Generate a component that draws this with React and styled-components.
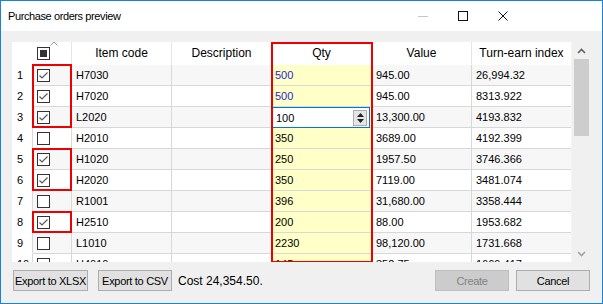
import React from 'react';
import styled, { createGlobalStyle } from 'styled-components';

const ROW_H = 21;
const HEAD_H = 23;

const rows = [
    { n: 1, code: 'H7030', qty: '500', value: '945.00', index: '26,994.32', checked: true, changed: true },
    { n: 2, code: 'H7020', qty: '500', value: '945.00', index: '8313.922', checked: true, changed: true },
    { n: 3, code: 'L2020', qty: '100', value: '13,300.00', index: '4193.832', checked: true, editing: true },
    { n: 4, code: 'H2010', qty: '350', value: '3689.00', index: '4192.399' },
    { n: 5, code: 'H1020', qty: '250', value: '1957.50', index: '3746.366', checked: true },
    { n: 6, code: 'H2020', qty: '350', value: '7119.00', index: '3481.074', checked: true },
    { n: 7, code: 'R1001', qty: '396', value: '31,680.00', index: '3358.444' },
    { n: 8, code: 'H2510', qty: '200', value: '88.00', index: '1953.682', checked: true },
    { n: 9, code: 'L1010', qty: '2230', value: '98,120.00', index: '1731.668' },
    { n: 10, code: 'H4010', qty: '145', value: '352.75', index: '1669.417' },
];

// rows whose checkboxes are boxed in red: [first row, count]
const marks = [[0, 3], [4, 2], [7, 1]];

const GlobalStyle = createGlobalStyle`
    html, body {
        margin: 0;
        padding: 0;
        background: #ffffff;
    }
    body {
        font-family: "Liberation Sans", Arial, sans-serif;
    }
`;

function CheckBox({ checked, partial }) {
    return (
        <Box>
            {checked && (
                <svg width="11" height="11" viewBox="0 0 11 11">
                    <path d="M1.5 5.5 L4 8 L9.5 2.5" fill="none" stroke="#5a5a5a" strokeWidth="1.2" />
                </svg>
            )}
            {partial && <Fill />}
        </Box>
    );
}

function App() {
    return (
        <>
            <GlobalStyle />
            <Window>
                <TitleBar>
                    <Title>Purchase orders preview</Title>
                    <Controls>
                        <Ctrl>
                            <svg width="10" height="10" viewBox="0 0 10 10">
                                <path d="M0 5.5 H10" stroke="#c4c4c4" strokeWidth="1" />
                            </svg>
                        </Ctrl>
                        <Ctrl>
                            <svg width="10" height="10" viewBox="0 0 10 10">
                                <rect x="0.5" y="0.5" width="9" height="9" fill="none" stroke="#111" strokeWidth="1" />
                            </svg>
                        </Ctrl>
                        <Ctrl>
                            <svg width="10" height="10" viewBox="0 0 10 10">
                                <path d="M0.5 0.5 L9.5 9.5 M9.5 0.5 L0.5 9.5" stroke="#111" strokeWidth="1" />
                            </svg>
                        </Ctrl>
                    </Controls>
                </TitleBar>

                <Body>
                    <GridArea>
                        <Table>
                            <HeadRow>
                                <HeadCell $left />
                                <HeadCell>
                                    <Caret>
                                        <svg width="8" height="5" viewBox="0 0 8 5">
                                            <path d="M0.5 4.5 L4 1 L7.5 4.5" fill="none" stroke="#9a9a9a" strokeWidth="1" />
                                        </svg>
                                    </Caret>
                                    <CheckBox partial />
                                </HeadCell>
                                <HeadCell $center>Item code</HeadCell>
                                <HeadCell $center>Description</HeadCell>
                                <HeadCell $center>Qty</HeadCell>
                                <HeadCell $center>Value</HeadCell>
                                <HeadCell $center>Turn-earn index</HeadCell>
                            </HeadRow>

                            {rows.map((r, i) => (
                                <Row key={r.n}>
                                    <NumCell>{r.n}</NumCell>
                                    <Cell $odd={i % 2 === 0}>
                                        <CheckBox checked={r.checked} />
                                    </Cell>
                                    <Cell $odd={i % 2 === 0}>{r.code}</Cell>
                                    <Cell $odd={i % 2 === 0}></Cell>
                                    <QtyCell $changed={r.changed}>
                                        {r.editing ? (
                                            <Editor>
                                                <span>{r.qty}</span>
                                                <Spin>
                                                    <svg width="7" height="4" viewBox="0 0 7 4">
                                                        <path d="M0 4 L3.5 0 L7 4 Z" fill="#222" />
                                                    </svg>
                                                    <svg width="7" height="4" viewBox="0 0 7 4">
                                                        <path d="M0 0 L3.5 4 L7 0 Z" fill="#222" />
                                                    </svg>
                                                </Spin>
                                            </Editor>
                                        ) : r.qty}
                                    </QtyCell>
                                    <Cell $odd={i % 2 === 0}>{r.value}</Cell>
                                    <Cell $odd={i % 2 === 0}>{r.index}</Cell>
                                </Row>
                            ))}

                            {marks.map(([start, count]) => (
                                <CheckMark
                                    key={start}
                                    style={{ top: HEAD_H + start * ROW_H - 1, height: count * ROW_H + 1 }}
                                />
                            ))}
                            <QtyMark />
                        </Table>

                        <ScrollBar>
                            <Arrow>
                                <svg width="9" height="6" viewBox="0 0 9 6">
                                    <path d="M1 5 L4.5 1.5 L8 5" fill="none" stroke="#606060" strokeWidth="1.6" />
                                </svg>
                            </Arrow>
                            <Track>
                                <Thumb />
                            </Track>
                            <Arrow>
                                <svg width="9" height="6" viewBox="0 0 9 6">
                                    <path d="M1 1 L4.5 4.5 L8 1" fill="none" stroke="#a0a0a0" strokeWidth="1.6" />
                                </svg>
                            </Arrow>
                        </ScrollBar>
                    </GridArea>

                    <Footer>
                        <Button $w={75}>Export to XLSX</Button>
                        <Button $gap={10}>Export to CSV</Button>
                        <Cost>Cost 24,354.50.</Cost>
                        <Spacer />
                        <Button disabled>Create</Button>
                        <Button $gap={7}>Cancel</Button>
                    </Footer>
                </Body>
            </Window>
        </>
    );
}

const Window = styled.div`
    width: 603px;
    height: 304px;
    box-sizing: border-box;
    border: 1px solid #1883d7;
    display: flex;
    flex-direction: column;
    overflow: hidden;
`;

const TitleBar = styled.div`
    height: 30px;
    background: #ffffff;
    display: flex;
    align-items: center;
    justify-content: space-between;
`;

const Title = styled.div`
    padding-left: 7px;
    font-size: 11px;
    letter-spacing: -0.4px;
    color: #000;
`;

const Controls = styled.div`
    display: flex;
    height: 100%;
    margin-right: 79px;
`;

const Ctrl = styled.div`
    width: 40px;
    height: 100%;
    display: flex;
    align-items: center;
    justify-content: center;
`;

const Body = styled.div`
    flex: 1;
    background: #f0f0f0;
    padding: 11px 12px 0 11px;
    display: flex;
    flex-direction: column;
`;

const GridArea = styled.div`
    height: 220px;
    display: flex;
    background: #ffffff;
`;

const Table = styled.div`
    position: relative;
    width: 560px;
    height: 220px;
    overflow: hidden;
    background: #ffffff;
`;

const HeadRow = styled.div`
    display: grid;
    grid-template-columns: 21px 39px repeat(5, 100px);
    height: ${HEAD_H}px;
`;

const HeadCell = styled.div`
    position: relative;
    box-sizing: border-box;
    border-right: 1px solid ${p => (p.$left ? '#ffffff' : '#e5e5e5')};
    border-bottom: 1px solid #ffffff;
    display: flex;
    align-items: center;
    justify-content: ${p => (p.$center ? 'center' : 'flex-start')};
    padding-left: ${p => (p.$center ? '0' : '4px')};
    font-size: 12px;
    color: #000;
`;

const Caret = styled.div`
    position: absolute;
    top: -1px;
    left: 17px;
    line-height: 0;
`;

const Row = styled.div`
    display: grid;
    grid-template-columns: 21px 39px repeat(5, 100px);
    height: ${ROW_H}px;
`;

const Cell = styled.div`
    box-sizing: border-box;
    border-right: 1px solid #d8d8d8;
    border-bottom: 1px solid #d8d8d8;
    background: ${p => (p.$odd ? '#f7f7f7' : '#ffffff')};
    display: flex;
    align-items: center;
    padding-left: 4px;
    font-size: 11px;
    color: #000;
    white-space: nowrap;
`;

const NumCell = styled(Cell)`
    background: #ffffff;
    border-bottom-color: #ffffff;
    border-right-color: #d8d8d8;
    padding-left: 5px;
`;

const QtyCell = styled(Cell)`
    background: #ffffc8;
    color: ${p => (p.$changed ? '#2727d6' : '#000')};
    padding-left: 3px;
`;

const Editor = styled.div`
    box-sizing: border-box;
    width: calc(100% + 2px);
    height: 21px;
    margin: 0 0 -1px -3px;
    padding: 0 2px 0 3px;
    background: #ffffff;
    border: 1px solid #0078d7;
    display: flex;
    align-items: center;
    justify-content: space-between;
    color: #000;
`;

const Spin = styled.div`
    box-sizing: border-box;
    width: 14px;
    height: 16px;
    background: #e5e5e5;
    border: 1px solid #adadad;
    display: flex;
    flex-direction: column;
    align-items: center;
    justify-content: space-evenly;
`;

const Box = styled.div`
    position: relative;
    box-sizing: border-box;
    width: 13px;
    height: 13px;
    border: 1px solid #333333;
    background: #ffffff;
    display: flex;
    align-items: center;
    justify-content: center;
`;

const Fill = styled.div`
    width: 7px;
    height: 7px;
    background: #333333;
`;

const CheckMark = styled.div`
    position: absolute;
    left: 20px;
    width: 40px;
    box-sizing: border-box;
    border: 2px solid #ee0000;
    pointer-events: none;
`;

const QtyMark = styled.div`
    position: absolute;
    left: 259px;
    top: 0;
    width: 102px;
    height: 221px;
    box-sizing: border-box;
    border: 2px solid #ee0000;
    pointer-events: none;
`;

const ScrollBar = styled.div`
    width: 18px;
    display: flex;
    flex-direction: column;
    background: #f0f0f0;
    border-left: 1px solid #f4f4f4;
`;

const Arrow = styled.div`
    height: 17px;
    display: flex;
    align-items: center;
    justify-content: center;
`;

const Track = styled.div`
    flex: 1;
    padding: 0 1px 0 2px;
`;

const Thumb = styled.div`
    height: 77px;
    background: #cdcdcd;
`;

const Footer = styled.div`
    display: flex;
    align-items: center;
    margin-top: 8px;
    padding-left: 1px;
`;

const Button = styled.button`
    box-sizing: border-box;
    width: ${p => p.$w || 74}px;
    height: 21px;
    padding: 0;
    margin-left: ${p => p.$gap || 0}px;
    background: ${p => (p.disabled ? '#cccccc' : '#e1e1e1')};
    border: 1px solid ${p => (p.disabled ? '#bfbfbf' : '#adadad')};
    font-family: "Liberation Sans", Arial, sans-serif;
    font-size: 11px;
    letter-spacing: -0.3px;
    white-space: nowrap;
    color: ${p => (p.disabled ? '#838383' : '#000')};
`;

const Cost = styled.div`
    margin-left: 6px;
    font-size: 12px;
    color: #000;
`;

const Spacer = styled.div`
    flex: 1;
`;

export default App;
